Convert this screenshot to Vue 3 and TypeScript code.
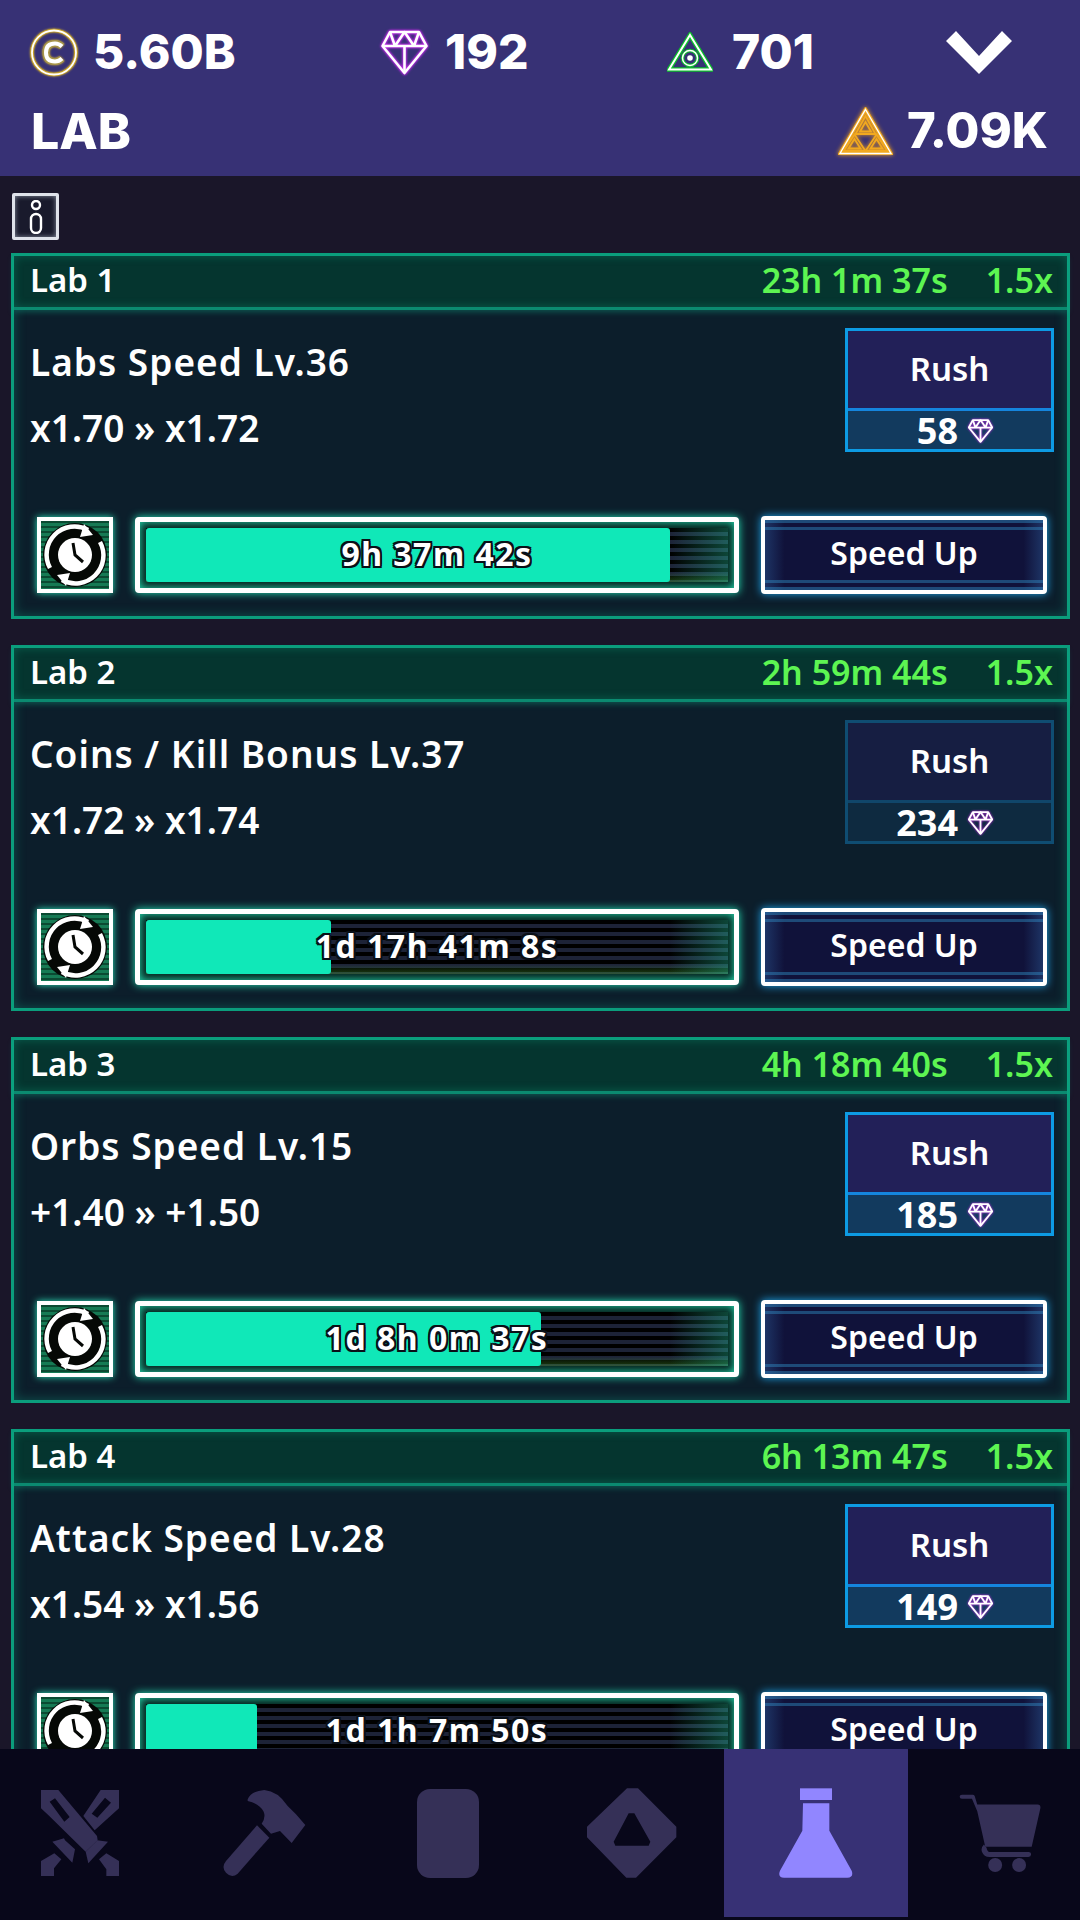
<script setup lang="ts">
interface Lab {
  name: string
  total: string
  title: string
  change: string
  cost: number
  dim?: boolean
  left: string
  progress: number
}

const labs: Lab[] = [
  { name: 'Lab 1', total: '23h 1m 37s', title: 'Labs Speed Lv.36', change: 'x1.70 » x1.72', cost: 58, left: '9h 37m 42s', progress: 90 },
  { name: 'Lab 2', total: '2h 59m 44s', title: 'Coins / Kill Bonus Lv.37', change: 'x1.72 » x1.74', cost: 234, dim: true, left: '1d 17h 41m 8s', progress: 31.8 },
  { name: 'Lab 3', total: '4h 18m 40s', title: 'Orbs Speed Lv.15', change: '+1.40 » +1.50', cost: 185, left: '1d 8h 0m 37s', progress: 67.9 },
  { name: 'Lab 4', total: '6h 13m 47s', title: 'Attack Speed Lv.28', change: 'x1.54 » x1.56', cost: 149, left: '1d 1h 7m 50s', progress: 19.1 },
]
</script>

<template>
  <div class="screen">
    <header class="top">
      <div class="top-row">
        <div class="stat stat--coins">
          <svg class="coin" width="48" height="49" viewBox="0 0 48 49">
            <circle cx="24" cy="24.5" r="22" fill="none" stroke="#c9a227" stroke-width="3.600" />
            <circle cx="24" cy="24.5" r="22" fill="none" stroke="#fff" stroke-width="1.800" />
            <path d="M32 18.500Q29 15.500 25 15.500Q16 15.500 16 24.500Q16 33.500 25 33.500Q29 33.500 32 30.500" fill="none" stroke="#a8964a" stroke-width="7" />
            <path d="M32 18.500Q29 15.500 25 15.500Q16 15.500 16 24.500Q16 33.500 25 33.500Q29 33.500 32 30.500" fill="none" stroke="#fff" stroke-width="4" />
          </svg>
          <span>5.60B</span>
        </div>
        <div class="stat stat--gems">
          <svg class="gem-big" width="47" height="45" viewBox="0 0 47 45">
            <g fill="none" stroke="#fff" stroke-width="2.600" stroke-linejoin="round">
              <path d="M9 2H38L45.500 16L23.500 43L1.500 16Z" />
              <path d="M1.500 16H45.500M23.500 16V43M9 2L14 16L23.500 2L33 16L38 2" />
            </g>
          </svg>
          <span>192</span>
        </div>
        <div class="stat stat--eye">
          <svg class="eye" width="46" height="40" viewBox="0 0 46 40">
            <path d="M23 3L44 37.500H2Z" fill="none" stroke="#0dc02c" stroke-width="4.500" />
            <path d="M23 3L44 37.500H2Z" fill="none" stroke="#fff" stroke-width="2" />
            <circle cx="23" cy="26" r="7.500" fill="none" stroke="#0dc02c" stroke-width="3.500" />
            <circle cx="23" cy="26" r="7.500" fill="none" stroke="#fff" stroke-width="1.500" />
            <circle cx="23" cy="26" r="2.800" fill="#fff" />
          </svg>
          <span>701</span>
        </div>
        <svg width="66" height="43" viewBox="0 0 66 43">
          <path d="M0 10L10 0L33 25L56 0L66 10L33 43Z" fill="#fff" />
        </svg>
      </div>
      <div class="top-row top-row--second">
        <h1 class="page-title">LAB</h1>
        <div class="stat stat--tokens">
          <svg class="tri" width="55" height="48" viewBox="0 0 55 48">
            <g fill="none" stroke-linejoin="miter">
              <path d="M27.500 2.500L53 46.500H2Z" stroke="#f2a91f" stroke-width="3.500" />
              <path d="M27.500 2.500L53 46.500H2Z" stroke="#fff" stroke-width="1.400" />
              <g stroke="#f2a91f" stroke-width="1.800">
                <path d="M27.500 9L37.500 27H17.500Z" />
                <path d="M16.500 27.500L27.500 44H5.500Z" />
                <path d="M38.500 27.500L49.500 44H27.500Z" />
                <path d="M27.500 15L33 24.500H22Z" />
                <path d="M16.500 32L22.500 41.500H10.500Z" />
                <path d="M38.500 32L44.500 41.500H32.500Z" />
              </g>
            </g>
          </svg>
          <span class="tokens-value">7.09K</span>
        </div>
      </div>
    </header>

    <main class="content">
      <button class="info-btn" aria-label="Info">
        <svg width="14" height="34" viewBox="0 0 14 34">
          <g fill="none" stroke="#fff" stroke-width="2.400">
            <circle cx="7" cy="5" r="4" />
            <rect x="2" y="14" width="10" height="19" rx="5" />
          </g>
        </svg>
      </button>

      <section v-for="lab in labs" :key="lab.name" class="card">
        <div class="card-head">
          <span class="lab-name">{{ lab.name }}</span>
          <span class="lab-total">{{ lab.total }}</span>
          <span class="lab-mult">1.5x</span>
        </div>
        <div class="card-body">
          <div class="research">
            <div class="research-text">
              <div class="research-title">{{ lab.title }}</div>
              <div class="research-change">{{ lab.change }}</div>
            </div>
            <div class="rush" :class="{ 'rush--dim': lab.dim }">
              <div class="rush-label">Rush</div>
              <div class="rush-cost">
                <span class="cost-value">{{ lab.cost }}</span>
                <svg class="gem-small" width="25" height="24" viewBox="0 0 47 45">
                  <g fill="none" stroke="#fff" stroke-width="3.400" stroke-linejoin="round">
                    <path d="M9 2H38L45.500 16L23.500 43L1.500 16Z" />
                    <path d="M1.500 16H45.500M23.500 16V43M9 2L14 16L23.500 2L33 16L38 2" />
                  </g>
                </svg>
              </div>
            </div>
          </div>
          <div class="controls">
            <div class="clock-btn">
              <svg width="68" height="68" viewBox="-34 -34 68 68">
                <circle r="32" fill="#050805" />
                <g fill="none" stroke="#fff" stroke-width="4.500">
                  <path d="M-25 13A28 28 0 0 1 13 -25" />
                  <path d="M25 -13A28 28 0 0 1 -13 25" />
                </g>
                <path d="M9 -31L18 -20L5 -18Z" fill="#fff" />
                <path d="M-9 31L-18 20L-5 18Z" fill="#fff" />
                <circle r="17" fill="#fff" />
                <path d="M-2 -12L0 0L8 7" fill="none" stroke="#050805" stroke-width="3" />
              </svg>
            </div>
            <div class="bar">
              <div class="track">
                <div class="fill" :style="{ width: lab.progress + '%' }"></div>
                <span class="time-left">{{ lab.left }}</span>
              </div>
            </div>
            <button class="speed-btn">Speed Up</button>
          </div>
        </div>
      </section>
    </main>

    <nav class="tabs">
      <div class="tab">
        <svg width="78" height="86" viewBox="36 27 234 258">
          <g class="ico">
            <path fill-rule="evenodd" d="M36 27H88L204 165L206 178L170 212L60 104L36 82ZM62 62L78 52L122 108L106 122Z" />
            <path fill-rule="evenodd" d="M215 27H270V82L197 148L163 105ZM228 50L246 65L205 110L188 98Z" />
            <path d="M205 178L237 182L178 247L170 212Z" />
            <path d="M70 182L105 172L108 178L138 205L130 245Z" />
            <path d="M210 235L232 217L270 240V285H232V265Z" />
            <path d="M97 235L76 217L36 240V285H75V262Z" />
          </g>
        </svg>
      </div>
      <div class="tab">
        <svg width="84" height="87" viewBox="578 27 252 261">
          <g class="ico">
            <path d="M683 133L720 170L625 278Q607 293 590 275Q575 258 590 240Z" />
            <path d="M655 55Q665 30 705 27Q745 30 775 75L800 100L828 132L787 186L752 150L725 158L697 128Q710 110 703 92Q690 68 655 60Z" />
          </g>
        </svg>
      </div>
      <div class="tab">
        <div class="card-icon"></div>
      </div>
      <div class="tab">
        <svg width="90" height="90" viewBox="50 24 270 270">
          <path class="ico" fill-rule="evenodd" d="M170 25H203L318 140V172L197 293H168L50 172V140ZM175 100L130 185L135 197H235L240 185L192 100Z" />
        </svg>
      </div>
      <div class="tab tab--active">
        <svg width="75" height="90" viewBox="625 22 225 270">
          <g fill="#9186ff">
            <rect x="688" y="23" width="96" height="35" />
            <path d="M697 68H776V150L843 270Q850 290 830 291H640Q620 290 628 270L695 150Z" />
          </g>
        </svg>
      </div>
      <div class="tab">
        <svg width="83" height="79" viewBox="54 38 248 238">
          <g class="ico">
            <path d="M55 46Q55 40 62 40H95Q100 40 102 50L108 70H290Q300 70 298 82L272 197H132L108 90L92 52H62Q55 52 55 46Z" />
            <path d="M128 190Q118 200 122 212Q128 228 145 228H262Q270 226 270 220Q270 213 262 213H145Q138 212 136 200Z" />
            <circle cx="162" cy="252" r="21" />
            <circle cx="234" cy="252" r="21" />
          </g>
        </svg>
      </div>
    </nav>
  </div>
</template>

<style>
html,
body {
  background: #08071a;
}
</style>

<style scoped>
.screen {
  display: flex;
  flex-direction: column;
  width: 1080px;
  height: 1920px;
  overflow: hidden;
  background: #1a1629;
  color: #fff;
  font-family: "Noto Sans", sans-serif;
}

/* Top bar */
.top {
  flex: 0 0 176px;
  box-sizing: border-box;
  padding: 27px 32px 0 30px;
  background: #373175;
  font-family: Inter, sans-serif;
  font-weight: 800;
  font-size: 48px;
  line-height: 50px;
}

.top-row {
  display: flex;
  align-items: center;
}

.top-row--second {
  justify-content: space-between;
  margin-top: 29px;
  padding-left: 1px;
  font-size: 50px;
}

.page-title {
  margin: 0;
  font: inherit;
}

.stat {
  display: flex;
  align-items: center;
  gap: 15px;
}

.stat--coins {
  width: 351px;
}

.stat--gems {
  width: 286px;
  gap: 17px;
}

.stat--eye {
  width: 279px;
  gap: 19px;
}

.stat--tokens {
  gap: 14px;
}

.tokens-value {
  font-size: 49px;
}

.coin {
  filter: drop-shadow(0 0 1px #d8b52c);
}

.gem-big {
  filter: drop-shadow(0 0 1px #c32bea) drop-shadow(0 0 1px #c32bea);
}

.tri {
  filter: drop-shadow(0 0 2px #f0a21c);
}

/* List */
.content {
  flex: 1;
  min-height: 0;
  overflow: hidden;
  padding: 17px 10px 0 11px;
}

.info-btn {
  display: flex;
  align-items: center;
  justify-content: center;
  box-sizing: border-box;
  width: 47px;
  height: 47px;
  margin: 0 0 13px 1px;
  padding: 0;
  border: 3px solid #dfe2ea;
  border-radius: 2px;
  background: #191a2c;
  box-shadow: inset 0 0 5px #8a90a0;
}

.card {
  box-sizing: border-box;
  height: 366px;
  margin-bottom: 26px;
  border: 3px solid #0b9d7c;
  background: #0c1e2b;
  box-shadow: inset 0 0 12px rgba(16, 190, 150, 0.35);
}

.card-head {
  display: flex;
  align-items: center;
  box-sizing: border-box;
  height: 54px;
  padding: 0 14px 4px 16px;
  border-bottom: 3px solid #0b8a70;
  background: #05352f;
  box-shadow: inset 0 0 10px rgba(16, 190, 150, 0.3), 0 2px 6px rgba(16, 190, 150, 0.35);
  font-size: 33px;
  font-weight: 600;
}

.lab-name {
  margin-right: auto;
}

.lab-total,
.lab-mult {
  color: #5df552;
  font-size: 34px;
}

.lab-total {
  margin-right: 1px;
}

.lab-mult {
  margin-left: 37px;
}

.card-body {
  padding: 19px 13px 0 16px;
}

.research {
  display: flex;
  justify-content: space-between;
  height: 123px;
}

.research-text {
  font-size: 37px;
  font-weight: 600;
  line-height: 66px;
}

.research-title {
  letter-spacing: 1px;
}

.rush {
  display: flex;
  flex-direction: column;
  box-sizing: border-box;
  width: 209px;
  margin-top: -1px;
  border: 3px solid #0d9be4;
  box-shadow: inset 0 0 7px rgba(20, 130, 230, 0.6);
}

.rush--dim {
  border-color: #0f4d72;
  box-shadow: none;
}

.rush-label {
  flex: 1;
  display: flex;
  align-items: center;
  justify-content: center;
  padding-bottom: 2px;
  border-bottom: 3px solid #1585de;
  background: #222058;
  font-size: 33px;
  font-weight: 600;
}

.rush--dim .rush-label {
  border-bottom-color: #10466a;
  background: #161e42;
}

.rush-cost {
  display: flex;
  align-items: center;
  gap: 10px;
  height: 38px;
  background: #123a5e;
  font-size: 36px;
  font-weight: 700;
}

.rush--dim .rush-cost {
  background: #0e2a40;
}

/* numbers end at the same spot whatever their length */
.cost-value {
  width: 110px;
  text-align: right;
}

.gem-small {
  margin-top: 2px;
  filter: drop-shadow(0 0 1px #d22ff0);
}

.controls {
  display: flex;
  align-items: center;
  gap: 22px;
  height: 76px;
  margin-top: 65px;
  padding: 0 6px 0 7px;
}

.clock-btn {
  flex: 0 0 76px;
  display: flex;
  box-sizing: border-box;
  height: 76px;
  border: 4px solid #fff;
  background: repeating-linear-gradient(#0b4a32 0 2px, #167a54 2px 5px);
  box-shadow: 0 0 7px #2ce8bd;
}

.bar {
  flex: 0 0 604px;
  box-sizing: border-box;
  height: 76px;
  padding: 6px;
  border: 5px solid #fff;
  border-radius: 4px;
  background: #07231f;
  box-shadow: 0 0 8px #26e6b8, inset 0 0 8px #26e6b8;
}

.track {
  position: relative;
  height: 100%;
  background:
    linear-gradient(90deg, transparent 90%, rgba(38, 200, 160, 0.35)),
    linear-gradient(transparent 82%, rgba(90, 200, 60, 0.3)),
    repeating-linear-gradient(#000 0 4px, #1d2337 4px 8px);
}

.fill {
  height: 100%;
  border-radius: 3px;
  background: #10e8b8;
}

/* timer sits over the fill */
.time-left {
  position: absolute;
  inset: -2px 0 2px;
  display: flex;
  align-items: center;
  justify-content: center;
  font-size: 32px;
  font-weight: 700;
  letter-spacing: 1.5px;
  text-shadow:
    2px 0 #0a1018, -2px 0 #0a1018, 0 2px #0a1018, 0 -2px #0a1018,
    2px 2px #0a1018, -2px 2px #0a1018, 2px -2px #0a1018, -2px -2px #0a1018;
}

.speed-btn {
  flex: 0 0 286px;
  box-sizing: border-box;
  height: 78px;
  padding: 0 0 5px;
  border: 4px solid #fff;
  border-radius: 4px;
  background:
    linear-gradient(90deg, rgba(60, 130, 200, 0.3), transparent 7%, transparent 93%, rgba(60, 130, 200, 0.3)),
    repeating-linear-gradient(#1e4a78 0 3px, #10123a 3px 7px) top / 100% 14px no-repeat,
    repeating-linear-gradient(#10123a 0 4px, #1e4a78 4px 7px) bottom / 100% 14px no-repeat,
    #10123a;
  box-shadow: 0 0 8px #1ea7f0;
  color: #fff;
  font-family: inherit;
  font-size: 32px;
  font-weight: 600;
}

/* Bottom nav */
.tabs {
  flex: 0 0 171px;
  display: flex;
  justify-content: center;
  position: relative;
  box-sizing: border-box;
  padding-bottom: 3px;
  background: #08071a;
}

.tab {
  flex: 0 0 184px;
  display: flex;
  align-items: center;
  justify-content: center;
}

.tab--active {
  background: #373175;
}

.ico {
  fill: #353057;
}

.card-icon {
  width: 62px;
  height: 89px;
  border-radius: 13px;
  background: #353057;
}
</style>
